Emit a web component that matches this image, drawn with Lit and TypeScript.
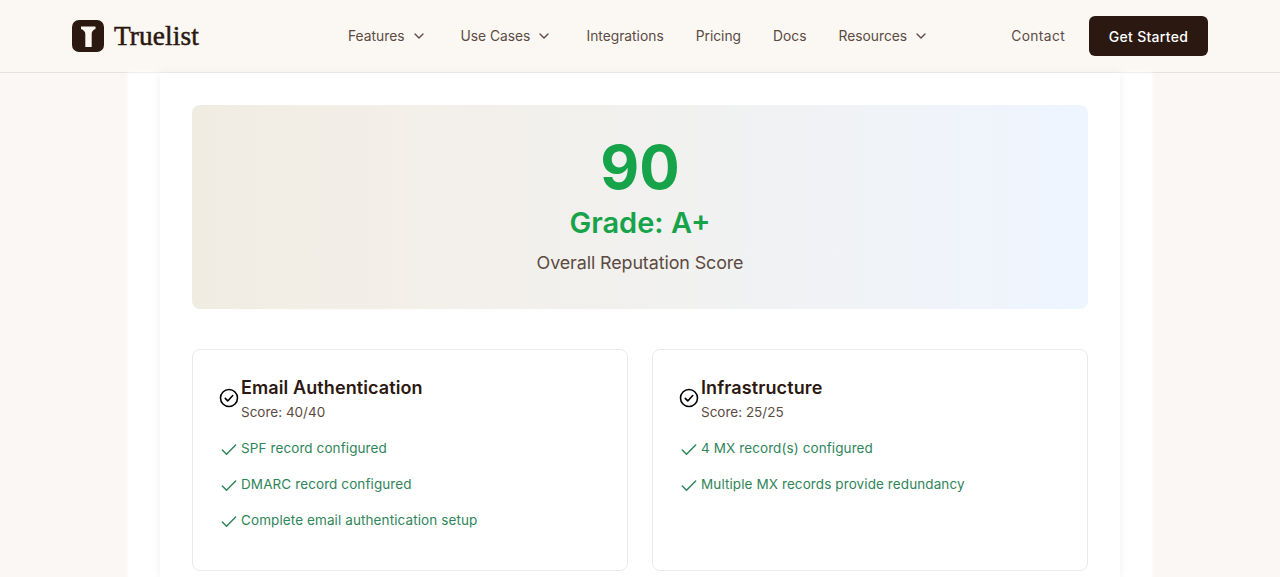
import { LitElement, html, css } from "lit";
import { customElement } from "lit/decorators.js";

const chevron = html`<svg class="chev" viewBox="0 0 24 24" fill="none" stroke="currentColor" stroke-width="2" stroke-linecap="round" stroke-linejoin="round"><path d="m6 9 6 6 6-6"/></svg>`;
const check = html`<svg class="check" viewBox="0 0 24 24" fill="none" stroke="#2f855a" stroke-width="1.8" stroke-linecap="round" stroke-linejoin="round"><path d="M20 6 9 17l-5-5"/></svg>`;
const circleCheck = html`<svg class="circle" viewBox="0 0 24 24" fill="none" stroke="#000" stroke-width="1.9" stroke-linecap="round" stroke-linejoin="round"><circle cx="12" cy="12" r="10.2"/><path d="m7.500 12.500 3 3 6-6.500"/></svg>`;

const cards = [
  { title: "Email Authentication", score: "Score: 40/40", items: ["SPF record configured", "DMARC record configured", "Complete email authentication setup"] },
  { title: "Infrastructure", score: "Score: 25/25", items: ["4 MX record(s) configured", "Multiple MX records provide redundancy"] },
];

@customElement("app-root")
export class AppRoot extends LitElement {
  static styles = css`
    :host { display: block; height: 577px; overflow: hidden; background: #fbf7f4; font-family: "Inter", "Noto Sans", sans-serif; color: #2b1810; }
    header { height: 73px; box-sizing: border-box; border-bottom: 1px solid #e6e2dd; background: #fbf8f4; display: flex; align-items: center; padding: 0 72px; }
    .brand { display: flex; align-items: center; gap: 10px; width: 276px; }
    .logo { width: 32px; height: 32px; display: block; flex: none; }
    .name { font-family: "Liberation Serif", serif; font-size: 27.3px; font-weight: 400; letter-spacing: 0.12px; -webkit-text-stroke: 0.5px #2b1810; color: #2b1810; }
    nav { display: flex; align-items: center; gap: 32px; flex: 1; }
    .link { display: flex; align-items: center; height: 20px; line-height: 20px; font-size: 13.8px; color: #5c4a42; white-space: nowrap; }
    .chev { width: 16px; height: 16px; margin-left: 6px; margin-right: 2px; }
    .right { display: flex; align-items: center; gap: 24px; }
    .contact { letter-spacing: 0.35px; }
    .btn { width: 119px; height: 40px; background: #2b1810; color: #fff; border-radius: 6px; display: flex; align-items: center; justify-content: center; font-size: 14px; font-weight: 500; letter-spacing: 0.3px; }
    .shell { width: 1024px; margin: 0 auto; background: #fff; padding: 0 32px; box-sizing: border-box; box-shadow: 0 0 4px #fff; }
    .panel { background: #fff; box-shadow: 0 0 8px rgba(60, 40, 20, 0.07); padding: 32px; height: 504px; box-sizing: border-box; display: flex; flex-direction: column; gap: 40px; }
    .hero { height: 204px; box-sizing: border-box; border-radius: 8px; background: linear-gradient(90deg, #f1ece2 0%, #f3efe9 25%, #f1f1f0 55%, #f0f3f8 80%, #eef5ff 100%); padding-top: 32px; text-align: center; flex: none; }
    .score { font-size: 60px; line-height: 60px; font-weight: 700; color: #16a34a; }
    .grade { font-size: 29px; line-height: 36px; font-weight: 600; color: #16a34a; margin-top: 8px; }
    .overall { font-size: 17.9px; letter-spacing: -0.1px; line-height: 28px; color: #5c4a42; margin-top: 8px; }
    .grid { display: grid; grid-template-columns: 1fr 1fr; gap: 24px; }
    .card { height: 222px; box-sizing: border-box; border: 1px solid #ece9e6; border-radius: 8px; padding: 24px 26px; }
    .head { display: flex; align-items: center; margin-bottom: 14px; }
    .circle { width: 20px; height: 20px; flex: none; margin-right: 2px; }
    .title { font-size: 18px; letter-spacing: 0.1px; line-height: 28px; font-weight: 600; color: #2b1810; }
    .sub { font-size: 13.5px; line-height: 20px; color: #5c4a42; }
    .item { display: flex; align-items: center; height: 24px; margin-bottom: 12px; font-size: 13.5px; letter-spacing: 0.1px; color: #2f855a; }
    .check { width: 20px; height: 20px; flex: none; margin-right: 2px; margin-top: 4px; }
  `;

  render() {
    return html`
      <header>
        <div class="brand">
          <svg class="logo" viewBox="0 0 32 32">
            <rect width="32" height="32" rx="7" fill="#2b1810"/>
            <path d="M9 6.500h14.500v2.500c-2.500 1-3.800 2.500-3.800 5V27h-6.400V14c0-2.500-1.800-4-4.300-5z" fill="#fbf7f0"/>
          </svg>
          <span class="name">Truelist</span>
        </div>
        <nav>
          <span class="link">Features${chevron}</span>
          <span class="link">Use Cases${chevron}</span>
          <span class="link">Integrations</span>
          <span class="link">Pricing</span>
          <span class="link">Docs</span>
          <span class="link">Resources${chevron}</span>
        </nav>
        <div class="right">
          <span class="link contact">Contact</span>
          <span class="btn">Get Started</span>
        </div>
      </header>
      <div class="shell">
        <div class="panel">
          <section class="hero">
            <div class="score">90</div>
            <div class="grade">Grade: A+</div>
            <div class="overall">Overall Reputation Score</div>
          </section>
          <section class="grid">
            ${cards.map((c) => html`
              <div class="card">
                <div class="head">
                  ${circleCheck}
                  <div>
                    <div class="title">${c.title}</div>
                    <div class="sub">${c.score}</div>
                  </div>
                </div>
                ${c.items.map((i) => html`<div class="item">${check}${i}</div>`)}
              </div>
            `)}
          </section>
        </div>
      </div>
    `;
  }
}
